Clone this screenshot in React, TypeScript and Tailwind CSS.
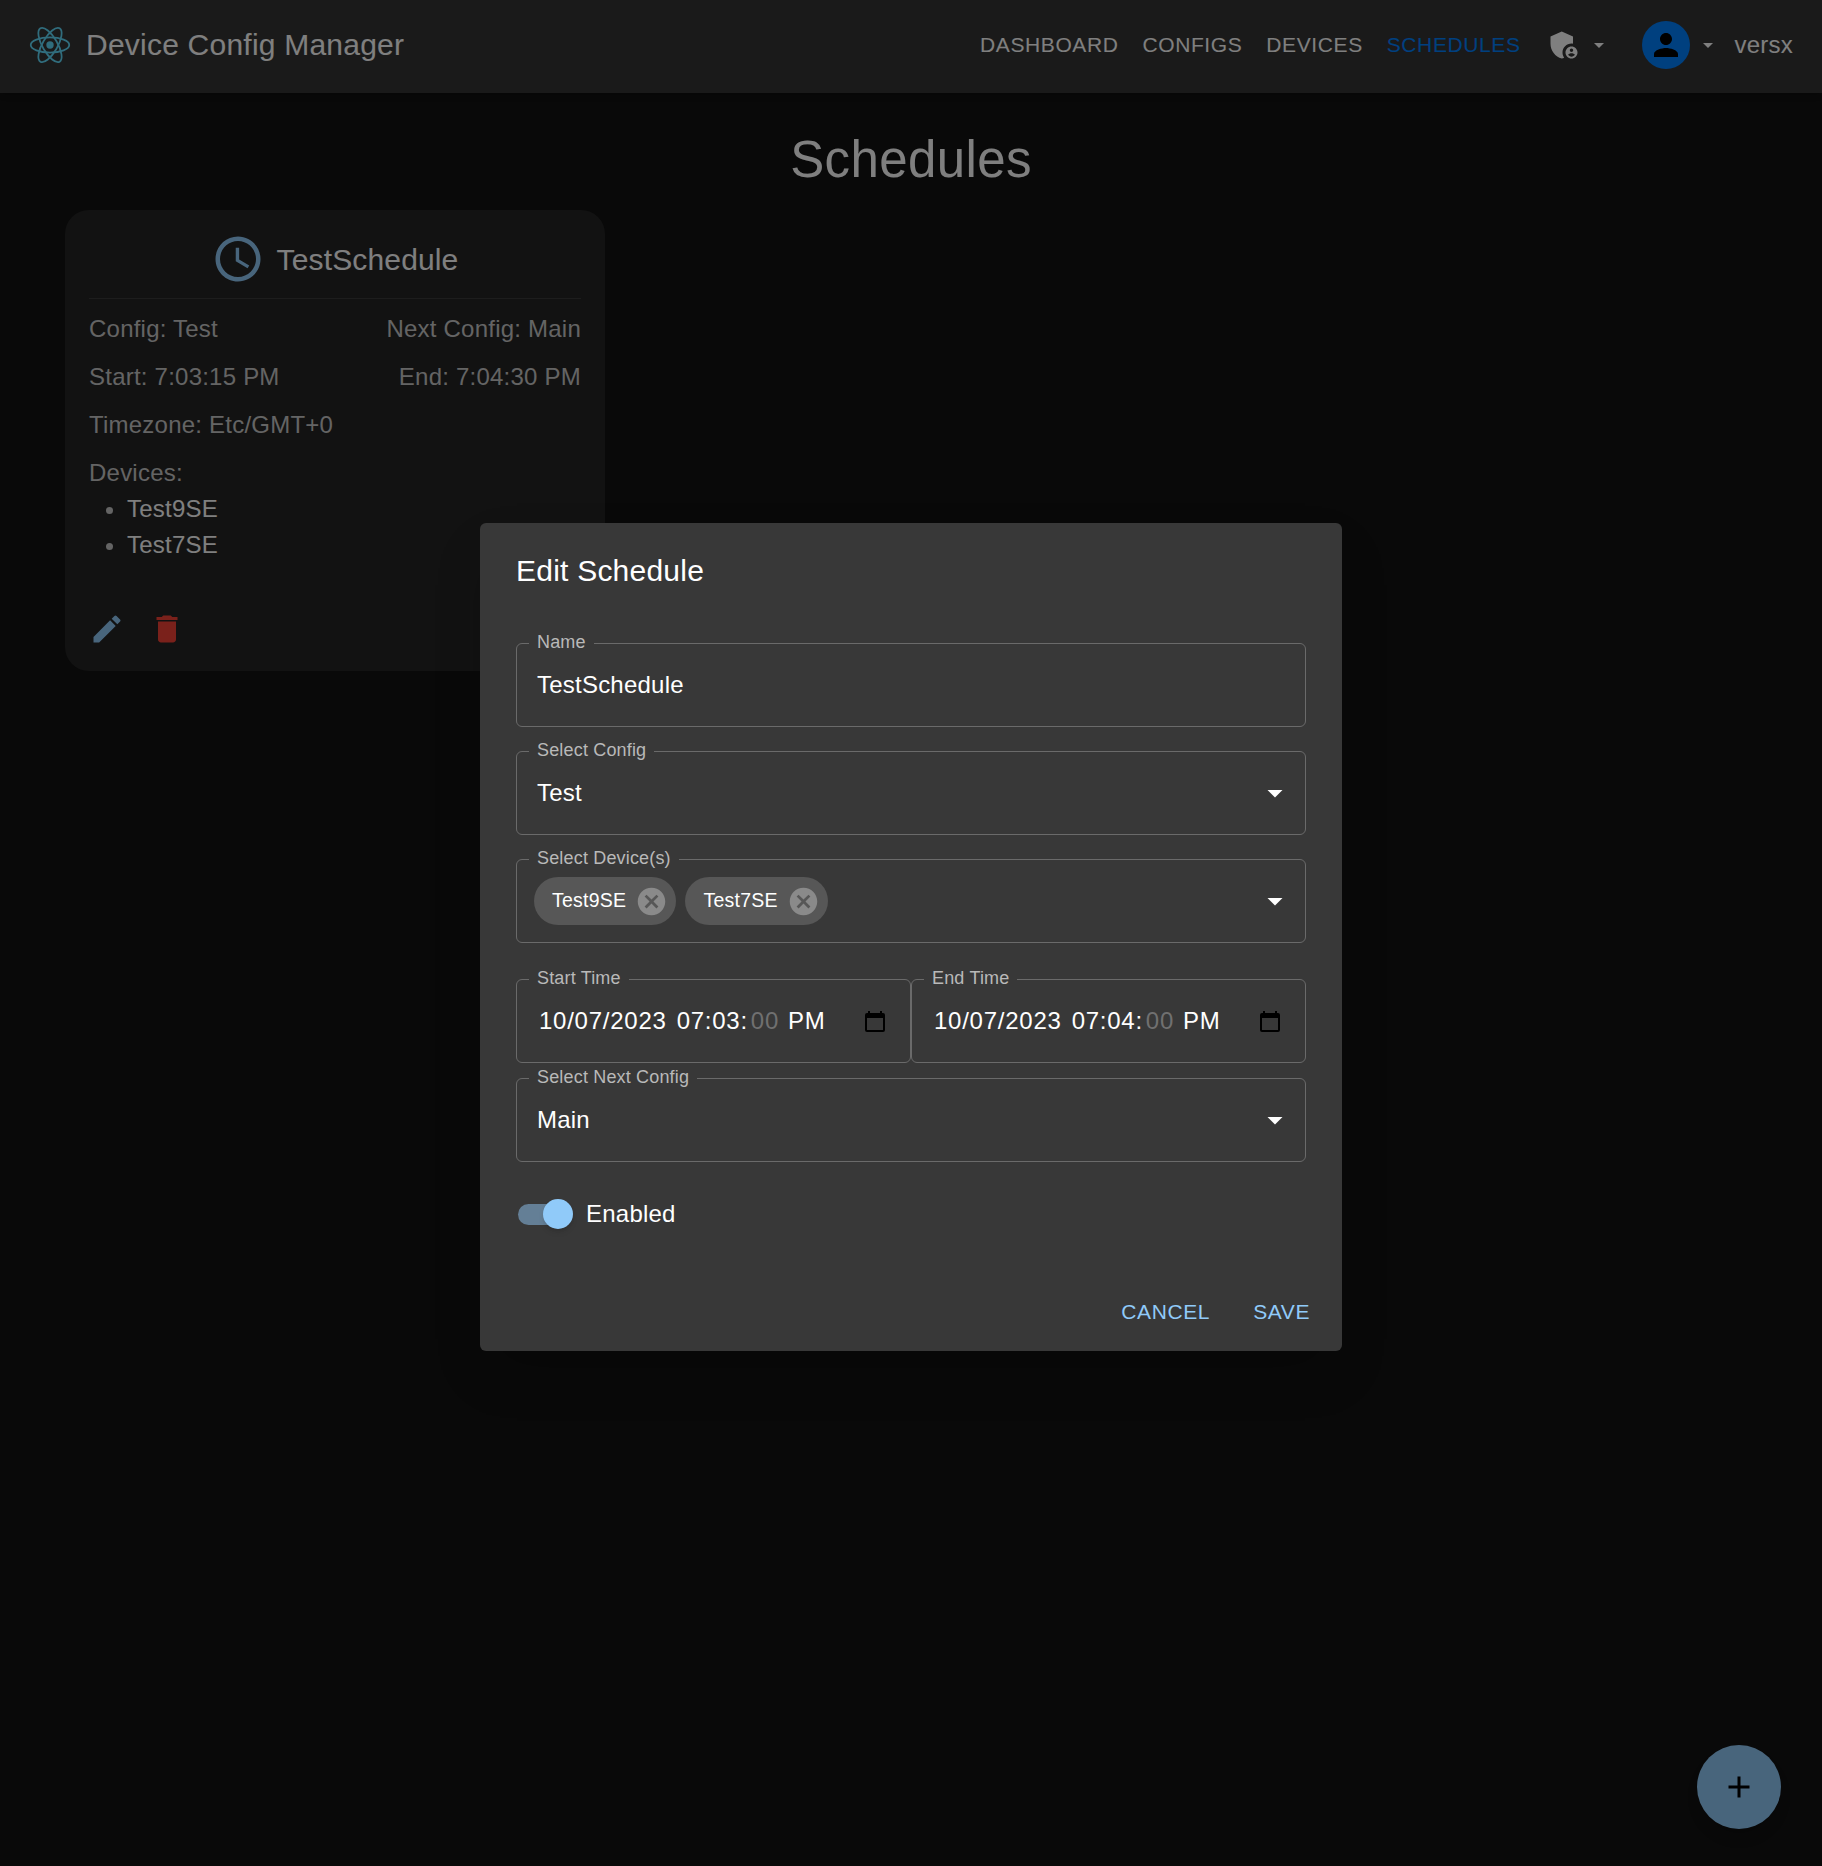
import React from "react";

const Glyph = ({ d, className }: { d: string; className?: string }) => (
  <svg viewBox="0 0 24 24" fill="currentColor" className={className}>
    <path d={d} />
  </svg>
);

const arrowDrop = "M7 10l5 5 5-5z";
const personPath =
  "M12 12c2.21 0 4-1.79 4-4s-1.79-4-4-4-4 1.79-4 4 1.79 4 4 4zm0 2c-2.67 0-8 1.34-8 4v2h16v-2c0-2.66-5.33-4-8-4z";
const adminPath =
  "M17 11c.34 0 .67.04 1 .09V6.27L10.5 3 3 6.27v4.91c0 4.54 3.2 8.79 7.5 9.82.55-.13 1.08-.32 1.6-.55-.69-.98-1.1-2.17-1.1-3.45 0-3.31 2.69-6 6-6zM17 13c-2.21 0-4 1.79-4 4s1.79 4 4 4 4-1.79 4-4-1.79-4-4-4zm0 1.38c.62 0 1.12.51 1.12 1.12s-.51 1.12-1.12 1.12-1.12-.51-1.12-1.12.5-1.12 1.12-1.12zm0 5.37c-.93 0-1.74-.46-2.24-1.17.05-.72 1.51-1.08 2.24-1.08s2.19.36 2.24 1.08c-.5.71-1.31 1.17-2.24 1.17z";
const clockPath =
  "M11.99 2C6.47 2 2 6.48 2 12s4.47 10 9.99 10C17.52 22 22 17.52 22 12S17.52 2 11.99 2zM12 20c-4.42 0-8-3.58-8-8s3.58-8 8-8 8 3.58 8 8-3.58 8-8 8zm.5-13H11v6l5.25 3.15.75-1.23-4.5-2.67z";
const editPath =
  "M3 17.25V21h3.75L17.81 9.94l-3.75-3.75L3 17.25zM20.71 7.04c.39-.39.39-1.02 0-1.41l-2.34-2.34a.9959.9959 0 0 0-1.41 0l-1.83 1.83 3.75 3.75 1.83-1.83z";
const deletePath = "M6 19c0 1.1.9 2 2 2h8c1.1 0 2-.9 2-2V7H6v12zM19 4h-3.5l-1-1h-5l-1 1H5v2h14V4z";
const cancelPath =
  "M12 2C6.47 2 2 6.47 2 12s4.47 10 10 10 10-4.47 10-10S17.53 2 12 2zm5 13.59L15.59 17 12 13.41 8.41 17 7 15.59 10.59 12 7 8.41 8.41 7 12 10.59 15.59 7 17 8.41 13.41 12 17 15.59z";
const addPath = "M19 13h-6v6h-2v-6H5v-2h6V5h2v6h6v2z";
const calendarPath =
  "M5 2h2v2h10V2h2v2h1a2 2 0 0 1 2 2v15a2 2 0 0 1-2 2H4a2 2 0 0 1-2-2V6a2 2 0 0 1 2-2h1V2zM4 9v12h16V9H4z";

const ReactLogo = () => (
  <svg viewBox="-12 -12 24 24" fill="none" stroke="#61dafb" strokeWidth="1" className="h-[46px] w-[42px]">
    <circle r="2.1" fill="#61dafb" stroke="none" />
    <ellipse rx="11" ry="4.3" />
    <ellipse rx="11" ry="4.3" transform="rotate(60)" />
    <ellipse rx="11" ry="4.3" transform="rotate(120)" />
  </svg>
);

const Field = ({
  label,
  className,
  children,
}: {
  label: string;
  className?: string;
  children: React.ReactNode;
}) => (
  <div
    className={`relative flex h-[84px] items-center rounded-[6px] border border-[#6a6a6a] text-[24px] tracking-[0.225px] text-white ${className ?? ""}`}
  >
    <span className="absolute left-[12px] top-[-14px] bg-[#383838] px-[8px] text-[18px] leading-[24px] tracking-[0.17px] text-[#b9b9b9]">
      {label}
    </span>
    {children}
  </div>
);

const SelectField = ({ label, value, className }: { label: string; value: string; className?: string }) => (
  <Field label={label} className={className}>
    <span className="pl-[20px]">{value}</span>
    <Glyph d={arrowDrop} className="ml-auto mr-[12px] h-[36px] w-[36px] text-white" />
  </Field>
);

const DateField = ({ label, time }: { label: string; time: string }) => (
  <Field label={label} className="w-[395px]">
    <div className="flex pl-[22px] tracking-[0.75px]">
      <span>10/07/2023</span>
      <span className="ml-[10px]">{time}:</span>
      <span className="ml-[3px] text-[#707070]">00</span>
      <span className="ml-[9px]">PM</span>
    </div>
    <Glyph d={calendarPath} className="ml-auto mr-[23px] h-[24px] w-[24px] text-black" />
  </Field>
);

const Chip = ({ text }: { text: string }) => (
  <div className="flex h-[48px] items-center rounded-full bg-[#575757] pl-[18px] pr-[8px] text-[19.5px] tracking-[0.25px] text-white">
    <span>{text}</span>
    <Glyph d={cancelPath} className="ml-[9px] h-[33px] w-[33px] text-[#8a8a8a]" />
  </div>
);

export default function App() {
  return (
    <div className="relative h-[1866px] overflow-hidden bg-[#121212] font-['Liberation_Sans',Arial,sans-serif] text-white">
      {/* page behind the dialog */}
      <header className="flex h-[93px] items-center bg-[#353535] pb-[4px] pl-[29px] pr-[29px] shadow-md">
        <ReactLogo />
        <h1 className="ml-[15px] text-[30px] tracking-[0.225px]">Device Config Manager</h1>
        <nav className="ml-auto flex items-center text-[21px] tracking-[0.6px]">
          <span>DASHBOARD</span>
          <span className="ml-[24px]">CONFIGS</span>
          <span className="ml-[24px]">DEVICES</span>
          <span className="ml-[24px] text-[#0080ff]">SCHEDULES</span>
          <Glyph d={adminPath} className="ml-[25px] h-[36px] w-[36px] text-white" />
          <Glyph d={arrowDrop} className="ml-[5px] h-[24px] w-[24px] text-white" />
          <div className="ml-[31px] flex h-[48px] w-[48px] items-center justify-center rounded-full bg-[#0080ff]">
            <Glyph d={personPath} className="h-[36px] w-[36px] text-black" />
          </div>
          <Glyph d={arrowDrop} className="ml-[6px] h-[24px] w-[24px] text-white" />
          <span className="ml-[15px] text-[24px] tracking-[0.225px]">versx</span>
        </nav>
      </header>

      <h2 className="mt-[31px] text-center text-[51px] leading-[72px] tracking-[0.375px]">Schedules</h2>

      <div className="ml-[65px] mt-[14px] h-[461px] w-[540px] rounded-[24px] bg-[#242424] px-[24px] text-[24px] tracking-[0.225px] text-[#c8c8c8]">
        <div className="flex h-[89px] items-center justify-center gap-[12px] border-b border-[#3a3a3a] pr-[1px] pt-[10px]">
          <Glyph d={clockPath} className="h-[54px] w-[54px] text-[#90caf9]" />
          <span className="text-[30px] tracking-[0.15px] text-white">TestSchedule</span>
        </div>
        <div className="mt-[16px] flex justify-between leading-[28px]">
          <span>Config: Test</span>
          <span>Next Config: Main</span>
        </div>
        <div className="mt-[20px] flex justify-between leading-[28px]">
          <span>Start: 7:03:15 PM</span>
          <span>End: 7:04:30 PM</span>
        </div>
        <p className="mt-[20px] leading-[28px]">Timezone: Etc/GMT+0</p>
        <p className="mt-[20px] leading-[28px]">Devices:</p>
        <ul className="mt-[4px] list-disc pl-[38px] leading-[36px] text-white marker:text-[#c8c8c8]">
          <li>Test9SE</li>
          <li>Test7SE</li>
        </ul>
        <div className="mt-[48px] flex items-center gap-[19px]">
          <Glyph d={editPath} className="h-[36px] w-[36px] text-[#90caf9]" />
          <Glyph d={deletePath} className="ml-[5px] h-[36px] w-[36px] text-[#f44336]" />
        </div>
      </div>

      <button className="absolute left-[1697px] top-[1745px] flex h-[84px] w-[84px] items-center justify-center rounded-full bg-[#90caf9] text-black shadow-lg">
        <Glyph d={addPath} className="h-[36px] w-[36px]" />
      </button>

      {/* scrim and dialog */}
      <div className="absolute inset-0 bg-black/50">
        <div className="mx-auto mt-[523px] h-[828px] w-[862px] rounded-[6px] bg-[#383838] px-[36px] shadow-2xl">
          <h3 className="pt-[24px] text-[30px] leading-[48px] tracking-[0.225px]">Edit Schedule</h3>
          <Field label="Name" className="mt-[48px]">
            <span className="pl-[20px]">TestSchedule</span>
          </Field>
          <SelectField label="Select Config" value="Test" className="mt-[24px]" />
          <Field label="Select Device(s)" className="mt-[24px]">
            <div className="flex gap-[9px] pl-[17px]">
              <Chip text="Test9SE" />
              <Chip text="Test7SE" />
            </div>
            <Glyph d={arrowDrop} className="ml-auto mr-[12px] h-[36px] w-[36px] text-white" />
          </Field>
          <div className="mt-[36px] flex">
            <DateField label="Start Time" time="07:03" />
            <DateField label="End Time" time="07:04" />
          </div>
          <SelectField label="Select Next Config" value="Main" className="mt-[15px]" />
          <div className="mt-[34px] flex items-center">
            <div className="relative ml-[2px] h-[21px] w-[52px] rounded-full bg-[#647f96]">
              <span className="absolute right-[-3px] top-[-5px] h-[30px] w-[30px] rounded-full bg-[#90caf9] shadow-md" />
            </div>
            <span className="ml-[16px] text-[24px] tracking-[0.225px]">Enabled</span>
          </div>
          <div className="mr-[-4px] mt-[64px] flex justify-end gap-[43px] text-[21px] tracking-[0.6px] text-[#90caf9]">
            <span>CANCEL</span>
            <span>SAVE</span>
          </div>
        </div>
      </div>
    </div>
  );
}
